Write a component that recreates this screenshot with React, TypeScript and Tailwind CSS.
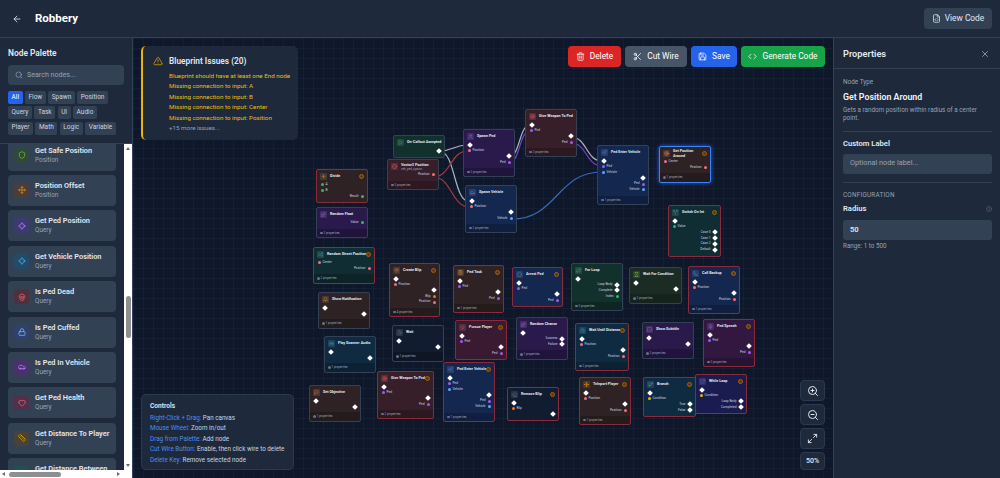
import React from "react";
import {
  ArrowLeft, Search, TriangleAlert, Trash2, Scissors, Save, Code, X, FileCode, Info, ZoomIn, ZoomOut, Maximize2,
  Shield, Move, Locate, Skull, Lock, Car, Heart, Ruler, Route, Play, Crosshair, User, Target, Divide, Dices,
  Shuffle, MapPin, Bell, Radio, Flag, Timer, Navigation, Repeat, Hourglass, Phone, MessageSquare, Mic, GitBranch,
  RotateCw, Split, ClipboardList, Circle, Eraser, Zap,
} from "lucide-react";

type Row = [side: "l" | "r", label: string, pin: keyof typeof pins];

const pins = {
  exec: "size-[4px] rotate-45 bg-white",
  red: "size-[3px] rounded-full bg-[#f87171]",
  purple: "size-[3px] rounded-full bg-[#a855f7]",
  blue: "size-[3px] rounded-full bg-[#60a5fa]",
  green: "size-[3px] rounded-full bg-[#22c55e]",
  orange: "size-[3px] rounded-full bg-[#f97316]",
  yellow: "size-[3px] rounded-full bg-[#eab308]",
  teal: "size-[3px] rounded-full bg-[#14b8a6]",
};

const themes = {
  green: "bg-[#12302c]",
  maroon: "bg-[#361f29]",
  purple: "bg-[#2a1a4c]",
  blue: "bg-[#14274f]",
  teal: "bg-[#0f2d32]",
  ocean: "bg-[#0f2b42]",
  dark: "bg-[#121c30]",
  olive: "bg-[#1b2c25]",
  indigo: "bg-[#1a1c50]",
  brown: "bg-[#2e2224]",
  crimson: "bg-[#391a30]",
  plum: "bg-[#321840]",
};

interface NodeDef {
  x: number;
  y: number;
  w: number;
  title: string;
  sub?: string;
  theme: keyof typeof themes;
  icon: React.ElementType;
  tint: string;
  rows: Row[];
  props?: number;
  state?: "error" | "selected";
}

const execIn: Row = ["l", "", "exec"];
const execOut: Row = ["r", "", "exec"];

const nodes: NodeDef[] = [
  { x: 393, y: 135, w: 52, title: "On-Callout Accepted", theme: "green", icon: Play, tint: "text-[#22c55e]", rows: [execOut] },
  { x: 387, y: 159, w: 52, title: "Vector3 Position", sub: "veh_ped_spawn", theme: "maroon", icon: Crosshair, tint: "text-[#ef4444]", rows: [["r", "Position", "red"]], props: 3 },
  { x: 463, y: 129, w: 52, title: "Spawn Ped", theme: "purple", icon: User, tint: "text-[#a855f7]", rows: [execIn, ["l", "Position", "red"], execOut, ["r", "Ped", "purple"]], props: 2 },
  { x: 465, y: 185, w: 52, title: "Spawn Vehicle", theme: "blue", icon: Car, tint: "text-[#3b82f6]", rows: [execIn, ["l", "Position", "red"], execOut, ["r", "Vehicle", "blue"]], props: 2 },
  { x: 525, y: 109, w: 52, title: "Give Weapon To Ped", theme: "maroon", icon: Target, tint: "text-[#ef4444]", rows: [execIn, ["l", "Ped", "purple"], execOut, ["r", "Ped", "purple"]], props: 2 },
  { x: 597, y: 145, w: 52, title: "Ped Enter Vehicle", theme: "blue", icon: Navigation, tint: "text-[#3b82f6]", rows: [execIn, ["l", "Ped", "purple"], ["l", "Vehicle", "blue"], execOut, ["r", "Ped", "purple"], ["r", "Vehicle", "blue"]], props: 1 },
  { x: 659, y: 146, w: 52, title: "Get Position\nAround", theme: "brown", icon: Target, tint: "text-[#f97316]", rows: [["l", "Center", "red"], ["r", "Position", "red"]], props: 1, state: "selected" },
  { x: 668, y: 205, w: 53, title: "Switch On Int", theme: "teal", icon: Split, tint: "text-[#14b8a6]", rows: [execIn, ["l", "Value", "teal"], ["r", "Case 0", "exec"], ["r", "Case 1", "exec"], ["r", "Case 2", "exec"], ["r", "Default", "exec"]], state: "error" },
  { x: 316, y: 169, w: 52, title: "Divide", theme: "brown", icon: Divide, tint: "text-[#f59e0b]", rows: [["l", "A", "green"], ["l", "B", "green"], ["r", "Result", "green"]], state: "error" },
  { x: 316, y: 207, w: 52, title: "Random Float", theme: "purple", icon: Dices, tint: "text-[#a855f7]", rows: [["r", "Value", "green"]], props: 2 },
  { x: 313, y: 247, w: 62, title: "Random Street Position", theme: "teal", icon: Shuffle, tint: "text-[#14b8a6]", rows: [["l", "Center", "red"], ["r", "Position", "red"]], props: 2, state: "error" },
  { x: 389, y: 263, w: 51, title: "Create Blip", theme: "brown", icon: MapPin, tint: "text-[#f97316]", rows: [execIn, ["l", "Position", "red"], execOut, ["r", "Blip", "orange"], ["r", "Position", "red"]], props: 4, state: "error" },
  { x: 453, y: 265, w: 51, title: "Ped Task", theme: "brown", icon: ClipboardList, tint: "text-[#f59e0b]", rows: [execIn, ["l", "Ped", "purple"], execOut, ["r", "Ped", "purple"]], props: 1, state: "error" },
  { x: 512, y: 267, w: 51, title: "Arrest Ped", theme: "blue", icon: Circle, tint: "text-[#3b82f6]", rows: [execIn, ["l", "Ped", "purple"], execOut, ["r", "Ped", "purple"]], state: "error" },
  { x: 571, y: 263, w: 52, title: "For Loop", theme: "green", icon: Repeat, tint: "text-[#22c55e]", rows: [execIn, ["r", "Loop Body", "exec"], ["r", "Complete", "exec"], ["r", "Index", "green"]], props: 3 },
  { x: 629, y: 267, w: 53, title: "Wait For Condition", theme: "olive", icon: Hourglass, tint: "text-[#84cc16]", rows: [execIn, execOut], props: 2 },
  { x: 688, y: 266, w: 52, title: "Call Backup", theme: "blue", icon: Phone, tint: "text-[#3b82f6]", rows: [execIn, ["l", "Position", "red"], execOut, ["r", "Position", "red"]], props: 1, state: "error" },
  { x: 318, y: 292, w: 52, title: "Show Notification", theme: "brown", icon: Bell, tint: "text-[#f59e0b]", rows: [execIn, execOut], props: 1 },
  { x: 392, y: 325, w: 52, title: "Wait", theme: "dark", icon: Timer, tint: "text-[#64748b]", rows: [execIn, execOut], props: 1 },
  { x: 455, y: 320, w: 52, title: "Pursue Player", theme: "crimson", icon: Zap, tint: "text-[#ef4444]", rows: [execIn, ["l", "Ped", "purple"], execOut, ["r", "Ped", "purple"]], state: "error" },
  { x: 516, y: 317, w: 52, title: "Random Chance", theme: "purple", icon: Dices, tint: "text-[#a855f7]", rows: [execIn, ["r", "Success", "exec"], ["r", "Failure", "exec"]], props: 1 },
  { x: 575, y: 323, w: 54, title: "Wait Until Distance", theme: "ocean", icon: Timer, tint: "text-[#06b6d4]", rows: [execIn, ["l", "Position", "red"], execOut, ["r", "Position", "red"]], props: 2, state: "error" },
  { x: 642, y: 322, w: 52, title: "Show Subtitle", theme: "purple", icon: MessageSquare, tint: "text-[#a855f7]", rows: [execIn, execOut], props: 2 },
  { x: 703, y: 319, w: 52, title: "Ped Speech", theme: "plum", icon: Mic, tint: "text-[#a855f7]", rows: [execIn, ["l", "Ped", "purple"], execOut, ["r", "Ped", "purple"]], props: 2, state: "error" },
  { x: 324, y: 336, w: 52, title: "Play Scanner Audio", theme: "ocean", icon: Radio, tint: "text-[#06b6d4]", rows: [execIn, execOut], props: 1 },
  { x: 377, y: 371, w: 57, title: "Give Weapon To Ped", theme: "maroon", icon: Target, tint: "text-[#ef4444]", rows: [execIn, ["l", "Ped", "purple"], execOut, ["r", "Ped", "purple"]], props: 2, state: "error" },
  { x: 443, y: 362, w: 52, title: "Ped Enter Vehicle", theme: "blue", icon: Navigation, tint: "text-[#3b82f6]", rows: [execIn, ["l", "Ped", "purple"], ["l", "Vehicle", "blue"], execOut, ["r", "Ped", "purple"], ["r", "Vehicle", "blue"]], props: 1, state: "error" },
  { x: 309, y: 385, w: 52, title: "Set Objective", theme: "brown", icon: Flag, tint: "text-[#f97316]", rows: [execIn, execOut], props: 1 },
  { x: 507, y: 387, w: 52, title: "Remove Blip", theme: "dark", icon: Eraser, tint: "text-[#64748b]", rows: [execIn, ["l", "Blip", "orange"], execOut], state: "error" },
  { x: 579, y: 377, w: 52, title: "Teleport Player", theme: "brown", icon: Move, tint: "text-[#f59e0b]", rows: [execIn, ["l", "Position", "red"], execOut, ["r", "Position", "red"]], props: 1, state: "error" },
  { x: 643, y: 377, w: 53, title: "Branch", theme: "ocean", icon: GitBranch, tint: "text-[#06b6d4]", rows: [execIn, ["l", "Condition", "yellow"], ["r", "True", "exec"], ["r", "False", "exec"]], state: "error" },
  { x: 695, y: 374, w: 52, title: "While Loop", theme: "indigo", icon: RotateCw, tint: "text-[#6366f1]", rows: [execIn, ["l", "Condition", "yellow"], ["r", "Loop Body", "exec"], ["r", "Completed", "exec"]], state: "error" },
];

// wire coordinates are page pixels, the svg is shifted by the canvas origin
const wires = [
  { d: "M439 151C454 151 453 145 468 145", c: "#aab4c2" },
  { d: "M439 151C456 151 453 202 470 202", c: "#aab4c2" },
  { d: "M433 177C451 177 450 151 468 151", c: "#a83a3a" },
  { d: "M433 177C452 177 451 207 470 207", c: "#a83a3a" },
  { d: "M509 157C520 157 519 125 530 125", c: "#aab4c2" },
  { d: "M509 163C520 163 519 131 530 131", c: "#7c3fc4" },
  { d: "M571 137C587 137 586 161 602 161", c: "#aab4c2" },
  { d: "M571 143C587 143 586 166 602 166", c: "#7c3fc4" },
  { d: "M512 219C557 219 557 172 602 172", c: "#3568b8" },
];

const palette = [
  { name: "Get Safe Position", cat: "Position", icon: Shield, box: "bg-[#2f4a3c]", tint: "text-[#84cc16]" },
  { name: "Position Offset", cat: "Position", icon: Move, box: "bg-[#4a3d3a]", tint: "text-[#f59e0b]" },
  { name: "Get Ped Position", cat: "Query", icon: Locate, box: "bg-[#3d3a72]", tint: "text-[#a78bfa]" },
  { name: "Get Vehicle Position", cat: "Query", icon: Locate, box: "bg-[#234a68]", tint: "text-[#38bdf8]" },
  { name: "Is Ped Dead", cat: "Query", icon: Skull, box: "bg-[#50303f]", tint: "text-[#f87171]" },
  { name: "Is Ped Cuffed", cat: "Query", icon: Lock, box: "bg-[#2f4170]", tint: "text-[#93c5fd]" },
  { name: "Is Ped In Vehicle", cat: "Query", icon: Car, box: "bg-[#48326c]", tint: "text-[#c084fc]" },
  { name: "Get Ped Health", cat: "Query", icon: Heart, box: "bg-[#52304a]", tint: "text-[#fb7185]" },
  { name: "Get Distance To Player", cat: "Query", icon: Ruler, box: "bg-[#4a4238]", tint: "text-[#eab308]" },
  { name: "Get Distance Between", cat: "Query", icon: Route, box: "bg-[#24504c]", tint: "text-[#34d399]" },
];

const chips = ["All", "Flow", "Spawn", "Position", "Query", "Task", "UI", "Audio", "Player", "Math", "Logic", "Variable"];

const issues = [
  "Blueprint should have at least one End node",
  "Missing connection to input: A",
  "Missing connection to input: B",
  "Missing connection to input: Center",
  "Missing connection to input: Position",
];

const controls = [
  ["Right-Click + Drag:", "Pan canvas"],
  ["Mouse Wheel:", "Zoom in/out"],
  ["Drag from Palette:", "Add node"],
  ["Cut Wire Button:", "Enable, then click wire to delete"],
  ["Delete Key:", "Remove selected node"],
];

const BlueprintNode = ({ node }: { node: NodeDef }) => {
  const Icon = node.icon;
  const border =
    node.state === "error"
      ? "border-[#8a2a3a]"
      : node.state === "selected"
        ? "border-[#3b82f6] shadow-[0_0_4px_#2563eb]"
        : "border-[#334155]";

  return (
    <div
      className={`absolute flex flex-col rounded-[2px] border-[1px] ${border} ${themes[node.theme]}`}
      style={{ left: node.x - 133, top: node.y - 38, width: node.w }}
    >
      <div className="flex min-h-[12px] items-center gap-[2px] px-[3px] pt-[1px]">
        <span className="flex size-[7px] shrink-0 items-center justify-center rounded-[1px] bg-white/10">
          <Icon className={`size-[5px] ${node.tint}`} />
        </span>
        <div className="min-w-0 flex-1 pl-[1px]">
          <div className="text-[3.7px] leading-[5px] font-bold whitespace-pre text-[#e2e8f0]">{node.title}</div>
          {node.sub && <div className="text-[3px] leading-[3px] text-[#94a3b8]">{node.sub}</div>}
        </div>
        {node.state && (
          <span className="flex size-[5px] shrink-0 rounded-full border-[0.5px] border-[#a16207] bg-[#5c3a14]" />
        )}
      </div>
      <div className="flex flex-col pb-[2.8px]">
        {node.rows.map((row, i) => (
          <div
            key={i}
            className={`flex h-[5.8px] items-center gap-[2px] px-[3.5px] ${row[0] === "r" ? "flex-row-reverse" : ""}`}
          >
            <span className={`shrink-0 ${pins[row[2]]}`} />
            <span className="text-[3.2px] leading-none text-[#cbd5e1]">{row[1]}</span>
          </div>
        ))}
      </div>
      {node.props !== undefined && (
        <div className="flex h-[8.5px] items-center gap-[1px] rounded-b-[2px] bg-black/20 px-[3px] text-[3px] text-[#94a3b8]">
          <span className="size-[2.5px] rounded-full bg-[#64748b]" />
          {node.props} properties
        </div>
      )}
    </div>
  );
};

const ActionButton = ({ icon: Icon, label, className }: { icon: React.ElementType; label: string; className: string }) => (
  <button className={`flex h-[21px] items-center justify-center gap-[5px] rounded-[4px] text-[8.4px] text-white ${className}`}>
    <Icon className="size-[9px]" />
    {label}
  </button>
);

const ZoomButton = ({ children, className = "h-[21px]" }: { children: React.ReactNode; className?: string }) => (
  <button className={`flex w-[25px] items-center justify-center rounded-[4px] border border-[#2b3a4f] bg-[#1e293b] text-[#e2e8f0] ${className}`}>
    {children}
  </button>
);

export default function App() {
  return (
    <div className="flex h-[478px] w-[1000px] flex-col overflow-hidden bg-[#0f172a] font-['Roboto','Noto_Sans',sans-serif] text-white">
      {/* Top bar */}
      <header className="flex h-[38px] shrink-0 items-center justify-between border-b border-[#334155] bg-[#1e293b] pr-[8px] pl-[12px]">
        <div className="flex items-center gap-[13px]">
          <ArrowLeft className="size-[10px] text-[#e2e8f0]" />
          <h1 className="text-[11.5px] font-bold">Robbery</h1>
        </div>
        <button className="flex h-[21px] w-[68px] items-center justify-center gap-[4px] rounded-[4px] bg-[#334155] text-[8.4px] text-[#e2e8f0]">
          <FileCode className="size-[9px]" />
          View Code
        </button>
      </header>

      <div className="flex min-h-0 flex-1">
        {/* Node palette */}
        <aside className="flex w-[133px] shrink-0 flex-col border-r border-[#334155] bg-[#1e293b]">
          <div className="shrink-0 border-b border-[#334155] px-[8px] pt-[10px] pb-[8px]">
            <h2 className="text-[8.4px] leading-[11px] font-semibold text-[#e2e8f0]">Node Palette</h2>
            <div className="mt-[6px] flex h-[20px] items-center gap-[4px] rounded-[4px] bg-[#334155] px-[7px]">
              <Search className="size-[8px] text-[#94a3b8]" />
              <span className="text-[7.1px] text-[#94a3b8]">Search nodes...</span>
            </div>
            <div className="mt-[6px] flex flex-wrap gap-[2.3px]">
              {chips.map((chip, i) => (
                <span
                  key={chip}
                  className={`flex h-[13px] items-center rounded-[2px] px-[3.6px] text-[6.5px] ${
                    i === 0 ? "bg-[#2563eb] text-white" : "bg-[#334155] text-[#cbd5e1]"
                  }`}
                >
                  {chip}
                </span>
              ))}
            </div>
          </div>
          <div className="flex min-h-0 flex-1 flex-col">
            <div className="flex min-h-0 flex-1">
              <div className="min-w-0 flex-1 overflow-hidden">
                <div className="-mt-[4px] flex flex-col gap-[4.4px] px-[8px]">
                  {palette.map((item) => {
                    const Icon = item.icon;
                    return (
                      <div key={item.name} className="flex h-[31px] shrink-0 items-center gap-[6px] rounded-[4px] bg-[#334155] px-[6px]">
                        <span className={`flex size-[15px] shrink-0 items-center justify-center rounded-[3px] ${item.box}`}>
                          <Icon className={`size-[8px] ${item.tint}`} />
                        </span>
                        <div className="min-w-0">
                          <div className="text-[7.35px] leading-[10px] font-semibold whitespace-nowrap text-[#e2e8f0]">{item.name}</div>
                          <div className="text-[6.4px] leading-[9px] text-[#94a3b8]">{item.cat}</div>
                        </div>
                      </div>
                    );
                  })}
                </div>
              </div>
              {/* vertical scrollbar */}
              <div className="flex w-[8px] shrink-0 flex-col items-center bg-white pt-[3px]">
                <span className="h-0 w-0 border-x-[2.5px] border-b-[3px] border-x-transparent border-b-[#6b6b6b]" />
                <span className="mt-[146px] h-[42px] w-[5px] rounded-full bg-[#8f8f8f]" />
                <span className="mt-auto mb-[3px] h-0 w-0 border-x-[2.5px] border-t-[3px] border-x-transparent border-t-[#6b6b6b]" />
              </div>
            </div>
            {/* horizontal scrollbar */}
            <div className="flex h-[8px] shrink-0 items-center bg-white pr-[12px] pl-[2px]">
              <span className="h-0 w-0 border-y-[2.5px] border-r-[3px] border-y-transparent border-r-[#6b6b6b]" />
              <span className="ml-[4px] h-[5px] w-[52px] rounded-full bg-[#8f8f8f]" />
              <span className="ml-auto h-0 w-0 border-y-[2.5px] border-l-[3px] border-y-transparent border-l-[#6b6b6b]" />
            </div>
          </div>
        </aside>

        {/* Canvas */}
        <main className="relative min-w-0 flex-1 overflow-hidden bg-[#0f172a] bg-[linear-gradient(rgba(71,85,105,0.12)_1px,transparent_1px),linear-gradient(90deg,rgba(71,85,105,0.12)_1px,transparent_1px)] bg-[size:10px_10px]">
          <svg className="absolute inset-0 h-full w-full" viewBox="133 38 700 440" fill="none">
            {wires.map((wire) => (
              <path key={wire.d + wire.c} d={wire.d} stroke={wire.c} strokeWidth="1.2" />
            ))}
          </svg>

          {nodes.map((node) => (
            <BlueprintNode key={`${node.title}-${node.x}`} node={node} />
          ))}

          {/* Issues */}
          <div className="absolute top-[8px] left-[8px] h-[94px] w-[157px] rounded-[5px] border-l-[2px] border-[#eab308] bg-[#1e293b] pt-[9px] pl-[10px]">
            <div className="flex items-center gap-[6px]">
              <TriangleAlert className="size-[10px] text-[#ca9a0b]" />
              <span className="text-[8.3px] font-semibold text-[#e2e8f0]">Blueprint Issues (20)</span>
            </div>
            <div className="mt-[3.5px] pl-[16px] text-[6.25px] leading-[10.4px] whitespace-nowrap text-[#e6c00d]">
              {issues.map((issue) => (
                <div key={issue}>{issue}</div>
              ))}
              <div className="text-[#94a3b8]">+15 more issues...</div>
            </div>
          </div>

          {/* Actions */}
          <div className="absolute top-[8px] right-[8px] flex gap-[4px]">
            <ActionButton icon={Trash2} label="Delete" className="w-[53px] bg-[#dc2626]" />
            <ActionButton icon={Scissors} label="Cut Wire" className="w-[62px] bg-[#475569]" />
            <ActionButton icon={Save} label="Save" className="w-[46px] bg-[#2563eb]" />
            <ActionButton icon={Code} label="Generate Code" className="w-[84px] bg-[#16a34a]" />
          </div>

          {/* Controls help */}
          <div className="absolute bottom-[8px] left-[8px] h-[76px] w-[153px] rounded-[5px] border border-[#2b3a4f] bg-[#1e293b] px-[8px] pt-[6px]">
            <div className="text-[6.6px] leading-[10px] font-semibold text-[#e2e8f0]">Controls</div>
            <div className="mt-[2px] text-[6.3px] leading-[10.4px] whitespace-nowrap text-[#cbd5e1]">
              {controls.map(([key, text]) => (
                <div key={key}>
                  <span className="text-[#4f8fe8]">{key}</span> {text}
                </div>
              ))}
            </div>
          </div>

          {/* Zoom */}
          <div className="absolute right-[8px] bottom-[8px] flex flex-col gap-[3px]">
            <ZoomButton><ZoomIn className="size-[12px]" /></ZoomButton>
            <ZoomButton><ZoomOut className="size-[12px]" /></ZoomButton>
            <ZoomButton><Maximize2 className="size-[11px]" /></ZoomButton>
            <ZoomButton className="h-[18px]"><span className="text-[7px] font-medium">50%</span></ZoomButton>
          </div>
        </main>

        {/* Properties */}
        <aside className="flex w-[167px] shrink-0 flex-col border-l border-[#334155] bg-[#1e293b]">
          <div className="flex h-[31px] shrink-0 items-center justify-between border-b border-[#334155] pt-[1px] pr-[10px] pl-[9px]">
            <h2 className="text-[9.2px] font-semibold text-[#e2e8f0]">Properties</h2>
            <X className="size-[10px] text-[#94a3b8]" />
          </div>
          <div className="flex flex-col px-[9px] pr-[8px]">
            <div className="mt-[9px] text-[6.4px] leading-[9px] text-[#94a3b8]">Node Type</div>
            <div className="mt-[3px] text-[8.8px] leading-[14px] font-semibold text-[#f1f5f9]">Get Position Around</div>
            <p className="mt-[2px] text-[6.3px] leading-[8.4px] text-[#94a3b8]">Gets a random position within radius of a center point.</p>
            <div className="mt-[8px] border-t border-[#334155]" />
            <div className="mt-[7px] text-[7.6px] leading-[10px] font-semibold text-[#e2e8f0]">Custom Label</div>
            <div className="mt-[5px] flex h-[20px] items-center rounded-[3px] bg-[#334155] px-[7px] text-[7.3px] text-[#94a3b8]">Optional node label...</div>
            <div className="mt-[8px] border-t border-[#334155]" />
            <div className="mt-[8px] text-[6.4px] leading-[9px] tracking-[0.2px] text-[#94a3b8] uppercase">Configuration</div>
            <div className="mt-[4px] flex items-center justify-between">
              <span className="text-[7.6px] leading-[10px] font-semibold text-[#e2e8f0]">Radius</span>
              <Info className="size-[6px] text-[#64748b]" />
            </div>
            <div className="mt-[6px] flex h-[20px] items-center rounded-[3px] bg-[#334155] px-[7px] text-[7.6px] font-semibold text-[#e2e8f0]">50</div>
            <div className="mt-[2px] text-[6.3px] leading-[9px] text-[#94a3b8]">Range: 1 to 500</div>
          </div>
        </aside>
      </div>
    </div>
  );
}
